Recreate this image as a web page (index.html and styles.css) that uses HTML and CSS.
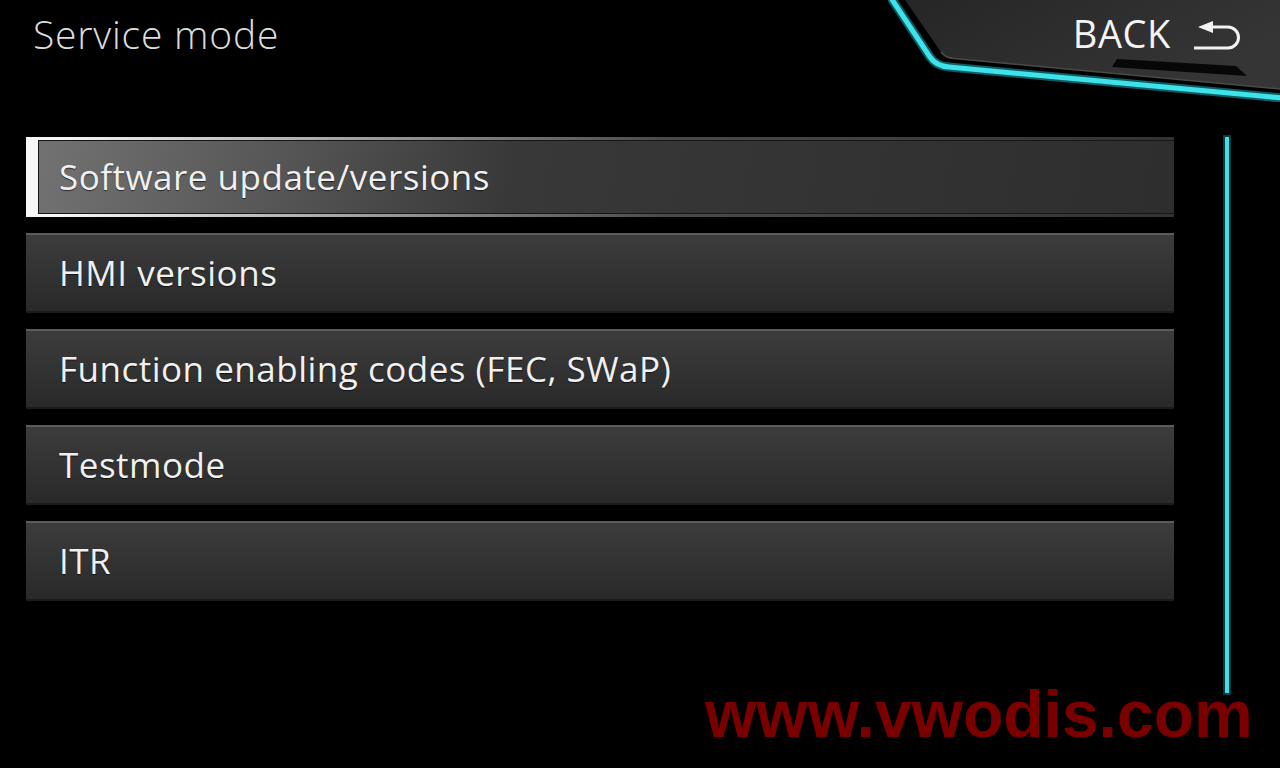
FILE: index.html
```html
<!DOCTYPE html>
<html lang="en">
<head>
    <meta charset="UTF-8">
    <title>Service mode</title>
    <link rel="stylesheet" href="styles.css">
</head>
<body>
    <div class="screen">
        <!-- Header -->
        <div class="header">
            <h1 class="title">Service mode</h1>

            <div class="back">
                <svg class="back-panel" width="392" height="104" viewBox="0 0 392 104">
                    <defs>
                        <linearGradient id="panelFill" x1="0" y1="0" x2="1" y2="0.4">
                            <stop offset="0" stop-color="#262626"/>
                            <stop offset="1" stop-color="#353535"/>
                        </linearGradient>
                    </defs>
                    <path d="M17,0 L53,52 Q57,58 66,58.5 L392,89 L392,0 Z" fill="url(#panelFill)"/>
                    <path d="M53,52 Q57,58 66,58.5 L392,89" fill="none" stroke="#4a4a4a" stroke-width="1.5"/>
                    <polygon points="229,59 348,66 359,76 224,67" fill="#070707"/>
                    <path d="M3,-2 L42,57 Q48,66 61,67 L394,98" fill="none" stroke="#0f5d62" stroke-width="9" stroke-linejoin="round"/>
                    <path d="M3,-2 L42,57 Q48,66 61,67 L394,98" fill="none" stroke="#3fe2ea" stroke-width="5" stroke-linejoin="round"/>
                </svg>
                <span class="back-label">BACK</span>
                <svg class="back-icon" width="48" height="32" viewBox="0 0 48 32">
                    <polygon points="5,7 20,1 20,13" fill="#f2f2f2"/>
                    <path d="M18,7 H35 A10.5,10.5 0 0 1 35,28 H1" fill="none" stroke="#f2f2f2" stroke-width="3"/>
                </svg>
            </div>
        </div>

        <!-- Menu -->
        <div class="content">
            <ul class="menu">
                <li class="row selected">Software update/versions</li>
                <li class="row">HMI versions</li>
                <li class="row">Function enabling codes (FEC, SWaP)</li>
                <li class="row">Testmode</li>
                <li class="row">ITR</li>
            </ul>
            <div class="scrollbar"></div>
        </div>

        <div class="watermark">www.vwodis.com</div>
    </div>
</body>
</html>
```

FILE: styles.css
```css
/* General */
body {
    margin: 0;
    background: #000;
    font-family: 'Open Sans', 'DejaVu Sans', sans-serif;
    color: #f0f0f0;
}

.screen {
    position: relative;
    width: 1280px;
    height: 768px;
    overflow: hidden;
    background: #000;
}

/* Header */
.header {
    display: flex;
    justify-content: space-between;
    height: 100px;
}

.title {
    margin: 0;
    padding: 7px 0 0 33px;
    font-size: 39px;
    font-weight: 300;
    letter-spacing: 0.8px;
    line-height: 1.362;
    color: #dcdcdc;
}

.back {
    position: relative;
    width: 392px;
    height: 100px;
    display: flex;
    align-items: flex-start;
    justify-content: flex-end;
    padding-right: 39px;
    box-sizing: border-box;
}

.back-panel {
    position: absolute;
    top: 0;
    left: 0;
}

.back-label {
    position: relative;
    margin-top: 8px;
    font-size: 38px;
    letter-spacing: 0.6px;
    line-height: 1.362;
    color: #f4f4f4;
}

.back-icon {
    position: relative;
    margin: 20px 0 0 22px;
}

/* Menu list */
.content {
    display: flex;
    align-items: flex-start;
    margin-top: 37px;
    padding-left: 26px;
}

.menu {
    list-style: none;
    margin: 0;
    padding: 0;
    width: 1148px;
    display: flex;
    flex-direction: column;
    gap: 16px;
}

.row {
    height: 80px;
    box-sizing: border-box;
    display: flex;
    align-items: center;
    padding-left: 33px;
    font-size: 35px;
    letter-spacing: 0.5px;
    line-height: 1.362;
    color: #f0f0f0;
    background: linear-gradient(#3c3c3c, #292929);
    border-top: 2px solid #5c5c5c;
    border-bottom: 2px solid #1c1c1c;
    text-shadow: 0 1px 1px rgba(0, 0, 0, 0.6);
}

.row.selected {
    padding-left: 21px;
    border-style: solid;
    border-width: 3px 0 3px 12px;
    border-image: linear-gradient(to right, #f6f6f6, #f6f6f6 2%, #9a9a9a 30%, #4a4a4a 55%, #333 100%) 1;
    background: linear-gradient(100deg, #727272 0%, #585858 20%, #383838 42%, #2e2e2e 100%);
    box-shadow: inset 1px 1px 0 #161616, inset 0 -1px 0 #161616;
}

.scrollbar {
    width: 4px;
    height: 556px;
    margin-left: 51px;
    background: #3fe0e8;
    box-shadow: 0 0 0 2px #0c3a3d;
}

/* Watermark */
.watermark {
    position: absolute;
    left: 705px;
    top: 681px;
    font-family: 'Liberation Sans', Arial, sans-serif;
    font-size: 66px;
    font-weight: bold;
    color: #7a0000;
    line-height: 1;
}
```
